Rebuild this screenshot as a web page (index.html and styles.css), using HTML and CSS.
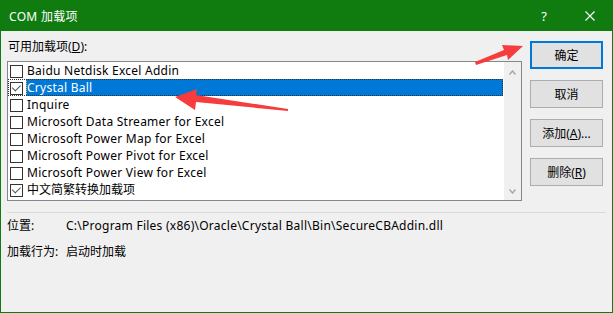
FILE: index.html
```html
<!DOCTYPE html>
<html lang="zh-CN">
<head>
  <meta charset="UTF-8">
  <title>COM 加载项</title>
  <link rel="stylesheet" href="styles.css">
</head>
<body>

  <div class="window">
    <!-- Title bar -->
    <div class="titlebar">
      <span class="title">COM 加载项</span>
      <span class="help">?</span>
      <svg class="close" width="10" height="10" viewBox="0 0 10 10">
        <path d="M0.5 0.5 L9.5 9.5 M9.5 0.5 L0.5 9.5" stroke="#fff" stroke-width="1.1" fill="none"/>
      </svg>
    </div>

    <div class="main">
      <div class="left">
        <div class="list-label">可用加载项(<u>D</u>):</div>

        <div class="listbox">
          <div class="items">
            <div class="item"><span class="cb"></span><span class="name latin">Baidu Netdisk Excel Addin</span></div>
            <div class="item focus"><span class="cb checked"></span><span class="name latin selected">Crystal Ball</span></div>
            <div class="item"><span class="cb"></span><span class="name latin">Inquire</span></div>
            <div class="item"><span class="cb"></span><span class="name latin">Microsoft Data Streamer for Excel</span></div>
            <div class="item"><span class="cb"></span><span class="name latin">Microsoft Power Map for Excel</span></div>
            <div class="item"><span class="cb"></span><span class="name latin">Microsoft Power Pivot for Excel</span></div>
            <div class="item"><span class="cb"></span><span class="name latin">Microsoft Power View for Excel</span></div>
            <div class="item"><span class="cb checked"></span><span class="name">中文简繁转换加载项</span></div>
          </div>
          <div class="scrollbar">
            <svg width="7" height="5" viewBox="0 0 7 5"><path d="M0.5 4.5 L3.5 1 L6.5 4.5" stroke="#a6a6a6" stroke-width="1.4" fill="none"/></svg>
            <svg width="7" height="5" viewBox="0 0 7 5"><path d="M0.5 0.5 L3.5 4 L6.5 0.5" stroke="#a6a6a6" stroke-width="1.4" fill="none"/></svg>
          </div>
        </div>
      </div>

      <!-- Buttons -->
      <div class="buttons">
        <button class="btn default">确定</button>
        <button class="btn">取消</button>
        <button class="btn">添加(<u>A</u>)...</button>
        <button class="btn">删除(<u>R</u>)</button>
      </div>
    </div>

    <div class="sep"></div>

    <div class="info">
      <div class="info-row"><span class="info-key">位置:</span><span class="latin">C:\Program Files (x86)\Oracle\Crystal Ball\Bin\SecureCBAddin.dll</span></div>
      <div class="info-row"><span class="info-key">加载行为:</span><span>启动时加载</span></div>
    </div>

    <!-- Red annotation arrows -->
    <svg class="arrows" width="613" height="313" viewBox="0 0 613 313">
      <polygon points="523,46 502,45 504,50 475,62 476,65 507,55 508,60" fill="#f63c3c"/>
      <polygon points="175,97 197,89 196,95 288,109 288,111 196,102 195,110" fill="#f63c3c"/>
    </svg>
  </div>

</body>
</html>
```

FILE: styles.css
```css
/* General */
body {
  margin: 0;
  font-family: "Noto Sans", "Noto Sans CJK SC", sans-serif;
  font-size: 12px;
  color: #000;
  background: #f0f0f0;
}
.latin {
  letter-spacing: 0.25px;
}

/* Window frame */
.window {
  position: relative;
  width: 613px;
  height: 313px;
  box-sizing: border-box;
  border: 1px solid #107c10;
  border-top: none;
  background: #f0f0f0;
}

.titlebar {
  display: flex;
  align-items: center;
  height: 31px;
  padding-left: 8px;
  background: #107c10;
  color: #fff;
}
.title {
  flex: 1;
  letter-spacing: 0.3px;
}
.help {
  font-size: 13px;
  margin-right: 38px;
}
.close {
  margin-right: 17px;
}

/* Main area */
.main {
  display: flex;
  gap: 8px;
  padding: 8px 9px 0 6px;
}
.left {
  width: 516px;
}
.list-label {
  line-height: 16px;
  padding-left: 1px;
  margin-bottom: 6px;
}

.listbox {
  display: flex;
  height: 140px;
  box-sizing: border-box;
  border: 1px solid #828790;
  background: #fff;
}
.items {
  flex: 1;
  margin-right: 1px;
}
.item {
  display: flex;
  height: 17px;
  line-height: 17px;
}
.item.focus {
  outline: 1px dotted #333;
  outline-offset: -1px;
}
.cb {
  width: 13px;
  height: 13px;
  box-sizing: border-box;
  margin: 3px 3px 0 2px;
  border: 1px solid #333;
  background: #fff;
  position: relative;
}
.cb.checked::after {
  content: "";
  position: absolute;
  left: 2px;
  top: 0px;
  width: 7px;
  height: 4px;
  border-left: 1px solid #555;
  border-bottom: 1px solid #555;
  transform: translate(0, 2px) rotate(-45deg);
  transform-origin: 3px 3px;
}
.name {
  padding-left: 1px;
  white-space: nowrap;
}
.name.selected {
  flex: 1;
  background: #0078d7;
  color: #fff;
  outline: 1px dotted #f0a030;
  outline-offset: -1px;
}

.scrollbar {
  width: 17px;
  display: flex;
  flex-direction: column;
  justify-content: space-between;
  align-items: center;
  padding: 8px 0 6px;
  box-sizing: border-box;
  background: #f0f0f0;
}

/* Buttons */
.buttons {
  display: flex;
  flex-direction: column;
  gap: 11px;
  padding-top: 2px;
}
.btn {
  width: 73px;
  height: 28px;
  padding: 0;
  font-family: inherit;
  font-size: 12px;
  background: #e1e1e1;
  border: 1px solid #adadad;
  color: #000;
}
.btn.default {
  border: 2px solid #0078d7;
}

/* Separator and info */
.sep {
  height: 1px;
  margin: 11px 6px 0;
  background: #dadada;
}
.info {
  padding: 5px 6px 0;
}
.info-row {
  display: flex;
  line-height: 16px;
  margin-bottom: 10px;
}
.info-key {
  width: 59px;
}

/* Annotations */
.arrows {
  position: absolute;
  left: -1px;
  top: 0;
  pointer-events: none;
}
```
